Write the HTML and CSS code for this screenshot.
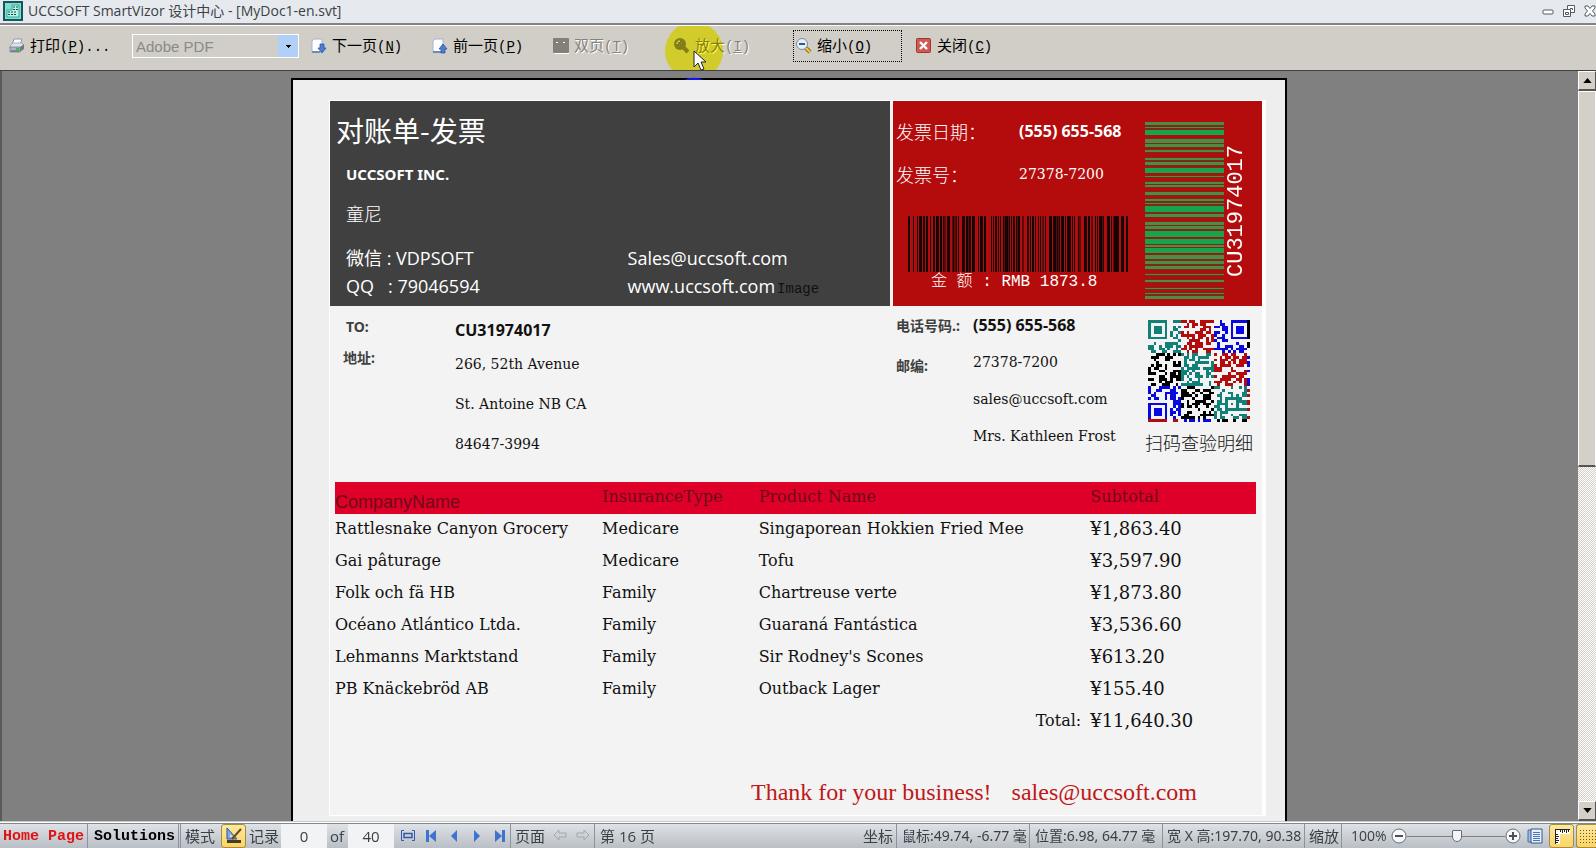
FILE: index.html
```html
<!DOCTYPE html>
<html lang="zh-CN">
<head>
<meta charset="utf-8">
<title>UCCSOFT SmartVizor 设计中心 - [MyDoc1-en.svt]</title>
<link rel="stylesheet" href="styles.css">
</head>
<body>
<div class="app">
  <header class="titlebar">
    <svg class="app-icon" viewBox="0 0 20 20"><rect width="20" height="20" fill="#14565a"/><rect x="2" y="2" width="16" height="16" fill="#7be0cd"/><path d="M9 4h7v12H4V9h5z" fill="#b9f4e6" stroke="#3aa596"/><path d="M10 6h2m1 0h2M10 8.500h2m1 0h2M5 11h2m1 0h2m1 0h2M5 13.500h2m1 0h2m1 0h2" stroke="#104c50"/></svg>
    <h1 class="title">UCCSOFT SmartVizor 设计中心 - [MyDoc1-en.svt]</h1>
    <div class="window-buttons">
      <button class="window-button" aria-label="最小化"><svg viewBox="0 0 12 12"><rect x="1" y="5" width="10" height="4" rx="1" fill="#fff" stroke="#555b62"/></svg></button>
      <button class="window-button" aria-label="还原"><svg viewBox="0 0 12 12"><path d="M4.500.5h7v7h-7z" fill="#fff" stroke="#555b62"/><path d="M.5 4.500h7v7h-7z" fill="#fff" stroke="#555b62"/><path d="M2.500 7.500h3v2h-3zM7 3.500h2.500V5" fill="none" stroke="#555b62"/></svg></button>
      <button class="window-button" aria-label="关闭窗口"><svg viewBox="0 0 12 12"><path d="M1 1h3l2 2.500L8 1h3v2L8.500 6 11 9v2H8L6 8.500 4 11H1V9l2.500-3L1 3z" fill="#fff" stroke="#555b62"/></svg></button>
    </div>
  </header>

  <div class="toolbar">
    <button class="tool print"><svg class="icon" viewBox="0 0 16 16"><path d="M5 1h8l-2 6H3z" fill="#fff" stroke="#8c98a8"/><path d="M1 8l3-3h9l2 2-3 3H1z" fill="#dfe4ea" stroke="#8a95a4" stroke-width=".7"/><path d="M1 9h10v5H1z" fill="#aab4c2" stroke="#6a7482" stroke-width=".7"/><path d="M11 9l4-3v5l-4 3z" fill="#6f7a89"/><path d="M2 13h8" stroke="#555e6c"/><path d="M7 11h3" stroke="#39c339" stroke-width="2"/></svg><span>打印<span class="key">(<u>P</u>)...</span></span></button>
    <select class="printer" aria-label="打印机" disabled><option>Adobe PDF</option></select>
    <div class="tools">
      <button class="tool"><svg class="icon" viewBox="0 0 16 16"><path d="M3 1h8v13H1V3z" fill="#fff" stroke="#a3b4d0"/><path d="M1 14h8" stroke="#7189b5" stroke-width="2"/><path d="M9 6h4v4h2l-4 5-4-5h2z" fill="#4d7dd0" stroke="#2c56a4" stroke-width=".8"/></svg><span>下一页<span class="key">(<u>N</u>)</span></span></button>
      <button class="tool"><svg class="icon" viewBox="0 0 16 16"><path d="M3 1h8v13H1V3z" fill="#fff" stroke="#a3b4d0"/><path d="M1 14h8" stroke="#7189b5" stroke-width="2"/><path d="M9 15h4v-4h2l-4-5-4 5h2z" fill="#4d7dd0" stroke="#2c56a4" stroke-width=".8"/></svg><span>前一页<span class="key">(<u>P</u>)</span></span></button>
      <button class="tool" disabled><svg class="icon" viewBox="0 0 16 16"><rect x="1" y="1" width="16" height="15" rx="1" fill="#fff"/><rect width="16" height="15" rx="1" fill="#838079"/><path d="M3 4.500h3m4 0h3" stroke="#fff" stroke-dasharray="2 1"/></svg><span>双页<span class="key">(<u>T</u>)</span></span></button>
      <button class="tool" disabled><svg class="icon" viewBox="0 0 16 16"><circle cx="6" cy="6" r="6" fill="#838079"/><path d="M9 9l5 5" stroke="#838079" stroke-width="4"/><path d="M3 6c0-2 1-3 3-3" stroke="#fff" fill="none"/></svg><span>放大<span class="key">(<u>I</u>)</span></span></button>
      <button class="tool focused"><svg class="icon" viewBox="0 0 16 16"><path d="M10 10l4 4" stroke="#8a6d14" stroke-width="4"/><path d="M10 10l4 4" stroke="#f2cf4a" stroke-width="2"/><circle cx="6" cy="6" r="5.500" fill="#e4f1fc" stroke="#7c8899"/><path d="M3 6h6" stroke="#35558f" stroke-width="2"/></svg><span>缩小<span class="key">(<u>O</u>)</span></span></button>
      <button class="tool"><svg class="icon" viewBox="0 0 16 16"><rect x=".5" y=".5" width="14" height="14" rx="1" fill="#cf5a54" stroke="#a33530"/><path d="M4 4l7 7m0-7l-7 7" stroke="#fff" stroke-width="2.400"/></svg><span>关闭<span class="key">(<u>C</u>)</span></span></button>
    </div>
    <div class="pointer-halo"></div>
  </div>

  <main class="workspace">
    <div class="canvas">
      <article class="sheet">
        <div class="invoice">
          <section class="banner">
            <div class="company">
              <h2 class="doc-title">对账单-发票</h2>
              <p class="company-name">UCCSOFT INC.</p>
              <p class="contact-name">童尼</p>
              <div class="contacts">
                <span>微信 : VDPSOFT</span><span>Sales@uccsoft.com</span>
                <span class="qq"><span>QQ</span><span>: 79046594</span></span><span class="site"><span>www.uccsoft.com</span><span class="image-tag">Image</span></span>
              </div>
            </div>
            <div class="meta">
              <div class="meta-main">
                <dl class="meta-list">
                  <dt>发票日期：</dt><dd class="strong">(555) 655-568</dd>
                  <dt>发票号：</dt><dd>27378-7200</dd>
                </dl>
                <svg class="barcode" id="barcode" viewBox="69 0 660 56" preserveAspectRatio="none" shape-rendering="crispEdges"></svg>
                <p class="amount">金 额 : RMB 1873.8</p>
              </div>
              <svg class="sidecode" id="sidecode" viewBox="0 96 79 531" preserveAspectRatio="none" shape-rendering="crispEdges"></svg>
              <p class="side-number">CU31974017</p>
            </div>
          </section>

          <section class="parties">
            <div class="labels left-labels"><span class="to">TO:</span><span>地址:</span></div>
            <div class="address"><strong>CU31974017</strong><span>266, 52th Avenue</span><span>St. Antoine NB CA</span><span>84647-3994</span></div>
            <div class="labels right-labels"><span>电话号码.:</span><span>邮编:</span></div>
            <div class="reach"><strong>(555) 655-568</strong><span>27378-7200</span><span>sales@uccsoft.com</span><span>Mrs. Kathleen Frost</span></div>
            <div class="qr"><svg class="qr-code" id="qr" viewBox="0 0 37 37" shape-rendering="crispEdges"></svg><span>扫码查验明细</span></div>
          </section>

          <table class="items">
            <thead><tr><th class="company-col">CompanyName</th><th class="type-col">InsuranceType</th><th class="product-col">Product Name</th><th>Subtotal</th></tr></thead>
            <tbody>
              <tr><td>Rattlesnake Canyon Grocery</td><td>Medicare</td><td>Singaporean Hokkien Fried Mee</td><td>¥1,863.40</td></tr>
              <tr><td>Gai pâturage</td><td>Medicare</td><td>Tofu</td><td>¥3,597.90</td></tr>
              <tr><td>Folk och fä HB</td><td>Family</td><td>Chartreuse verte</td><td>¥1,873.80</td></tr>
              <tr><td>Océano Atlántico Ltda.</td><td>Family</td><td>Guaraná Fantástica</td><td>¥3,536.60</td></tr>
              <tr><td>Lehmanns Marktstand</td><td>Family</td><td>Sir Rodney's Scones</td><td>¥613.20</td></tr>
              <tr><td>PB Knäckebröd AB</td><td>Family</td><td>Outback Lager</td><td>¥155.40</td></tr>
            </tbody>
            <tfoot><tr><td colspan="3" class="total">Total:</td><td>¥11,640.30</td></tr></tfoot>
          </table>
          <p class="thanks"><span>Thank for your business!</span><span>sales@uccsoft.com</span></p>
        </div>
      </article>
    </div>
    <div class="scrollbar">
      <button class="scroll-button" aria-label="向上滚动"><svg viewBox="0 0 10 6"><path d="M5 0l5 6H0z"/></svg></button>
      <div class="track"><div class="thumb"></div></div>
      <button class="scroll-button" aria-label="向下滚动"><svg viewBox="0 0 10 6"><path d="M5 6l5-6H0z"/></svg></button>
    </div>
  </main>

  <footer class="statusbar">
    <a class="link home" href="#home">Home Page</a>
    <a class="link" href="#solutions">Solutions</a>
    <span class="cell mode">模式</span>
    <button class="toggle" aria-label="设计模式"><svg viewBox="0 0 18 18"><path d="M2 1v11h10z" fill="#7ca9ea" stroke="#2855a8"/><path d="M5 7v3h3z" fill="#ffe08a"/><path d="M2 16h14v-3H2z" fill="#4a3b22"/><path d="M7 12L16 2" stroke="#6b4a22" stroke-width="2"/></svg></button>
    <label class="cell record" for="record">记录</label>
    <input class="field" id="record" value="0">
    <label class="of" for="count">of</label>
    <input class="field" id="count" value="40">
    <div class="nav">
      <button aria-label="适合宽度"><svg viewBox="0 0 14 14"><path d="M3 1.500H.5v10H3M11 1.500h2.500v10H11" fill="none" stroke="#315aa5"/><rect x="3" y="4.500" width="8" height="4" fill="none" stroke="#315aa5" stroke-width="1.500"/></svg></button>
      <button aria-label="首记录"><svg viewBox="0 0 14 14"><path d="M2 1h3v12H2zM12 1v12L5 7z" fill="#3f73d2"/></svg></button>
      <button aria-label="上一记录"><svg viewBox="0 0 14 14"><path d="M10 1v12L4 7z" fill="#3f73d2"/></svg></button>
      <button aria-label="下一记录"><svg viewBox="0 0 14 14"><path d="M4 1v12l6-6z" fill="#3f73d2"/></svg></button>
      <button aria-label="末记录"><svg viewBox="0 0 14 14"><path d="M9 1h3v12H9zM2 1v12l7-6z" fill="#3f73d2"/></svg></button>
    </div>
    <span class="cell pages">页面</span>
    <div class="arrows">
      <button disabled aria-label="上一页"><svg viewBox="0 0 14 14"><path d="M1 6l5-5v3h7v4H6v3z" fill="none" stroke="#a2a7ac"/></svg></button>
      <button disabled aria-label="下一页"><svg viewBox="0 0 14 14"><path d="M13 6L8 1v3H1v4h7v3z" fill="none" stroke="#a2a7ac"/></svg></button>
    </div>
    <span class="cell current">第 16 页</span>
    <span class="cell coords">坐标</span>
    <span class="cell measure">鼠标:49.74, -6.77 毫</span>
    <span class="cell measure">位置:6.98, 64.77 毫</span>
    <span class="cell size">宽 X 高:197.70, 90.38</span>
    <span class="cell zoom-label">缩放</span>
    <span class="percent">100%</span>
    <button class="zoom-button" aria-label="缩小显示"><svg viewBox="0 0 16 16"><circle cx="8" cy="8" r="7" fill="#f7f8f9" stroke="#666b70"/><path d="M4 8h8" stroke="#4b5056" stroke-width="2"/></svg></button>
    <input class="zoom" type="range" min="0" max="100" value="51" aria-label="缩放比例">
    <button class="zoom-button" aria-label="放大显示"><svg viewBox="0 0 16 16"><circle cx="8" cy="8" r="7" fill="#f7f8f9" stroke="#666b70"/><path d="M4 8h8M8 4v8" stroke="#4b5056" stroke-width="2"/></svg></button>
    <button class="view-button" aria-label="页面视图"><svg viewBox="0 0 16 16"><path d="M1 2h4v12H1z" fill="#9db9e4" stroke="#4b6fa8"/><path d="M4 1h11v14H4z" fill="#e9f1fc" stroke="#35568f"/><path d="M6 4.500h7M6 6.500h7M6 8.500h7M6 10.500h7M6 12.500h7" stroke="#4d76b8"/></svg></button>
    <button class="toggle" aria-label="标尺"><svg viewBox="0 0 18 18"><path d="M2 2h15v5H7v10H2z" fill="#fff"/><path d="M2.500 2v15M2 2.500h15M7.500 2v3M9.500 2v4M11.500 2v3M13.500 2v4M15.500 2v3M2 7.500h3M2 9.500h4M2 11.500h3M2 13.500h4M2 15.500h3" stroke="#222" fill="none"/></svg></button>
    <button class="toggle last" aria-label="网格"><svg viewBox="0 0 18 18"><path d="M0 3.500h18M0 6.500h18M0 9.500h18M0 12.500h18M0 15.500h18" stroke="#6b5520" stroke-dasharray="1 2"/></svg></button>
  </footer>

  <svg class="pointer" viewBox="0 0 30 32"><path d="M0 30c3-3 15-3 18 0z" fill="#1414e6"/><path d="M9 1v16l4-4 3 7 3-1-3-7h5z" fill="#fff" stroke="#222"/></svg>
</div>
<script src="codes.js"></script>
</body>
</html>
```
FILE: styles.css
```css
* { box-sizing: border-box; }
body {
  margin: 0;
  font-family: "Noto Sans", "Noto Sans CJK SC", sans-serif;
  font-size: 15px;
  color: #111;
}
h1, h2, p, dl, dd { margin: 0; }
svg { display: block; }
button {
  border: 0;
  padding: 0;
  background: none;
  color: inherit;
  font: inherit;
}
.app {
  position: relative;
  display: flex;
  flex-direction: column;
  height: 100vh;
  overflow: hidden;
}

.titlebar {
  flex: none;
  display: flex;
  align-items: center;
  gap: 5px;
  height: 25px;
  padding: 0 0 2px 3px;
  background: #e6eaee;
  border-bottom: 2px solid #848284;
}
.app-icon { width: 20px; height: 20px; }
.title {
  flex: 1;
  font-family: "Open Sans", "Noto Sans CJK SC", sans-serif;
  font-size: 14px;
  line-height: 20px;
  font-weight: 400;
  color: #3b4046;
}
.window-buttons { display: flex; gap: 9px; }
.window-button { width: 12px; height: 12px; }

.toolbar {
  position: relative;
  flex: none;
  display: flex;
  align-items: center;
  height: 46px;
  padding: 0 9px 4px;
  overflow: hidden;
  background: #d1cec7;
  border-top: 1px solid #fff;
  border-bottom: 1px solid #404040;
  font-family: "Noto Sans CJK SC", sans-serif;
}
.tool {
  display: flex;
  align-items: center;
  gap: 5px;
  width: 109px;
  height: 32px;
  padding-left: 2px;
  line-height: 20px;
  color: #000;
  white-space: nowrap;
}
.tool .icon { width: 16px; height: 16px; }
.tool:disabled { color: #85827c; text-shadow: 1px 1px #fff; }
.tool.focused { border: 1px dotted #000; }
.tool.print { width: 123px; padding-left: 0; }
.key { font-family: "Liberation Mono", monospace; font-size: 14px; }
.printer {
  width: 167px;
  height: 24px;
  padding: 0 3px;
  appearance: none;
  border: 1px solid #fff;
  border-radius: 0;
  opacity: 1;
  color: #8a8a88;
  font: 15px "Liberation Sans", sans-serif;
  background-color: #d1cec7;
  background-image:
    linear-gradient(#000, #000),
    linear-gradient(#000, #000),
    linear-gradient(#000, #000),
    linear-gradient(#b0d0f8, #b0d0f8);
  background-repeat: no-repeat;
  background-position: right 7px top 10px, right 8px top 11px, right 9px top 12px, right top;
  background-size: 5px 1px, 3px 1px, 1px 1px, 20px 100%;
}
.tools { display: flex; gap: 12px; margin-left: 10px; }
.pointer-halo {
  position: absolute;
  left: 665px;
  top: -4px;
  width: 58px;
  height: 58px;
  border-radius: 50%;
  background: #fffc38;
  mix-blend-mode: multiply;
}
.pointer {
  position: absolute;
  left: 685px;
  top: 50px;
  width: 30px;
  height: 32px;
}

.workspace {
  flex: 1;
  min-height: 0;
  display: flex;
  background: #808080;
  box-shadow: inset 2px 0 #5a5a5a;
}
.canvas {
  flex: 1;
  display: flex;
  justify-content: center;
  align-items: flex-start;
  padding-top: 7px;
  overflow: hidden;
}
.sheet {
  width: 100%;
  max-width: 996px;
  padding: 20px 19px 40px 36px;
  background: #eee;
  border: 2px solid #000;
}
.invoice {
  background: #f3f3f3;
  border: 1px solid #fff;
  border-right-width: 4px;
}
.banner { display: grid; grid-template-columns: 560fr 369fr; gap: 3px; }
.company { background: #404040; color: #fff; }
.doc-title {
  padding-left: 6px;
  font: 400 28px/58px "Noto Sans CJK SC", sans-serif;
}
.company-name {
  padding-left: 16px;
  font-size: 15px;
  line-height: 30px;
  font-weight: 700;
}
.contact-name {
  padding-left: 16px;
  font: 300 18px/48px "Noto Sans CJK SC", sans-serif;
}
.contacts {
  display: grid;
  grid-template-columns: 281fr 262fr;
  padding: 7px 0 6px 16px;
  font-family: "Open Sans", "Noto Sans CJK SC", sans-serif;
  font-size: 18px;
  line-height: 28px;
  white-space: nowrap;
}
.qq { display: grid; grid-template-columns: 42px auto; justify-content: start; }
.site { display: flex; align-items: baseline; gap: 2px; }
.image-tag { color: #111; font: 14px "Liberation Mono", monospace; }

.meta { display: flex; background: #b40c0c; color: #fff; }
.meta-main { flex: 1; padding-top: 9px; }
.meta-list {
  display: grid;
  grid-template-columns: 123px auto;
  padding-left: 3px;
  line-height: 43px;
}
.meta-list dt { font: 300 18px/43px "Noto Sans CJK SC", sans-serif; }
.meta-list dd { font: 14px/43px "DejaVu Serif", serif; }
.meta-list dd.strong { font: 700 16px/43px "Noto Sans", sans-serif; }
.barcode { width: 220px; height: 56px; margin: 20px 0 0 15px; }
.amount {
  padding-left: 23px;
  font: 300 16px/20px "Liberation Mono", "Noto Sans CJK SC", monospace;
  white-space: pre;
  padding-left: 38px;
}
.sidecode { width: 79px; height: 177px; margin: 21px 0 0; }
.side-number {
  width: 38px;
  padding: 29px 0 0 8px;
  writing-mode: vertical-rl;
  transform: rotate(180deg);
  font: 22px/26px "Liberation Mono", monospace;
}

.parties {
  display: grid;
  grid-template-columns: 125px 441px 77px 173px auto;
  height: 176px;
  white-space: nowrap;
}
.parties > div { display: flex; flex-direction: column; }
.labels {
  color: #404040;
  font-family: "Noto Sans", "Noto Sans CJK SC", sans-serif;
  font-size: 14px;
  font-weight: 700;
}
.left-labels { padding: 5px 0 0 13px; line-height: 31px; }
.to { padding-left: 3px; }
.right-labels { line-height: 40px; }
.address {
  padding-top: 8px;
  font: 14px/40px "DejaVu Serif", serif;
}
.address strong { font: 700 16px/32px "Noto Sans", sans-serif; margin-bottom: -2px; }
.reach {
  padding-top: 1px;
  font: 14px/37px "DejaVu Serif", serif;
}
.reach strong { font: 700 16px/37px "Noto Sans", sans-serif; }
.parties .qr {
  width: 106px;
  align-items: center;
  gap: 6px;
  padding-top: 14px;
  font: 300 18px/28px "Noto Sans CJK SC", sans-serif;
}
.qr-code { width: 102px; height: 102px; }

.items {
  width: calc(100% - 11px);
  margin-left: 5px;
  table-layout: fixed;
  border-collapse: collapse;
  font: 16px/24px "DejaVu Serif", serif;
}
.items th, .items td { height: 32px; padding: 0 0 2px; text-align: left; white-space: nowrap; }
.items thead { background: #de0028; color: #6e0a18; }
.items th { font-weight: 400; vertical-align: top; padding-top: 3px; }
.items .company-col {
  width: 29%;
  padding-bottom: 0;
  vertical-align: bottom;
  font-family: "Liberation Sans", sans-serif;
  font-size: 18px;
}
.type-col { width: 17%; }
.product-col { width: 36%; }
.items td:last-child { font-size: 18px; }
.items .total { padding-right: 9px; text-align: right; }
.thanks {
  display: flex;
  justify-content: flex-end;
  gap: 20px;
  padding: 38px 65px 7px 0;
  color: #be1818;
  font: 24px/32px "Liberation Serif", serif;
}

.scrollbar { width: 18px; display: flex; flex-direction: column; }
.scroll-button {
  height: 20px;
  display: grid;
  place-items: center;
  background: #d4d0c8;
  border: 1px solid #fff;
  border-right-color: #555;
  border-bottom: 2px solid #555;
}
.scroll-button svg { width: 9px; height: 5px; }
.track { flex: 1; background: repeating-conic-gradient(#fff 0 25%, #d4d0c8 0 50%) 0 0 / 2px 2px; }
.thumb {
  height: 53%;
  background: #d4d0c8;
  border: 1px solid #fff;
  border-bottom: 2px solid #555;
}

.statusbar {
  flex: none;
  display: flex;
  align-items: stretch;
  height: 27px;
  overflow: hidden;
  border-top: 1px solid #c8caca;
  box-shadow: inset 0 1px #fff, inset 0 2px #7e8890;
  padding-top: 2px;
  background: linear-gradient(#e2e5e8, #b9bfc6);
  color: #3b4046;
  font: 15px/24px "Open Sans", "Noto Sans CJK SC", sans-serif;
  white-space: nowrap;
}
.statusbar > * { flex: none; }
.link {
  width: 91px;
  padding-left: 6px;
  border-right: 1px solid #8c939a;
  color: #000;
  text-decoration: none;
  font: 700 15px/26px "Liberation Mono", monospace;
}
.link.home { width: 88px; padding-left: 3px; color: #e01414; }
.mode { width: 41px; padding-left: 4px; border-left: 1px solid #8c939a; margin-left: 1px; }
.toggle {
  width: 25px;
  padding: 2px 3px;
  background: linear-gradient(#fbe9a0, #fcd462);
  border: 1px solid #a58a45;
  border-radius: 3px;
}
.toggle svg { width: 18px; height: 18px; }
.toggle.last {
  width: 20px;
  margin-left: 2px;
  padding-right: 0;
  border-right: 0;
  border-radius: 3px 0 0 3px;
  overflow: hidden;
}
.record { width: 35px; padding-left: 3px; }
.statusbar .field {
  width: 46px;
  border: 0;
  padding: 0;
  background: #f2f3f4;
  color: inherit;
  font: inherit;
  text-align: center;
}
.of { width: 21px; padding-left: 3px; }
.nav, .arrows { display: flex; align-items: center; }
.nav { width: 117px; gap: 9px; padding-left: 7px; border-right: 1px solid #8c939a; }
.nav svg, .arrows svg { width: 14px; height: 14px; }
.pages { width: 42px; padding-left: 4px; }
.arrows { width: 42px; gap: 9px; border-right: 1px solid #8c939a; }
.statusbar .current { flex: 1 1 0; padding-left: 5px; overflow: hidden; }
.coords, .measure, .size, .zoom-label { border-right: 1px solid #8c939a; }
.coords { width: 34px; }
.measure, .size { font-family: "Noto Sans", "Noto Sans CJK SC", sans-serif; font-size: 14px; }
.measure { width: 133px; padding-left: 5px; }
.size { width: 142px; padding-left: 4px; }
.zoom-label { width: 37px; padding-left: 4px; }
.percent { width: 49px; padding-left: 9px; font-size: 14px; }
.zoom-button svg { width: 16px; height: 16px; }
.zoom {
  width: 98px;
  margin: 0;
  appearance: none;
  background: linear-gradient(#7c8186, #7c8186) center / 100% 1px no-repeat;
}
.zoom::-webkit-slider-thumb {
  appearance: none;
  width: 10px;
  height: 12px;
  background: #f4f5f6;
  border: 1px solid #666b70;
  border-radius: 1px 1px 5px 5px;
}
.view-button { width: 28px; padding-left: 6px; }
.view-button svg { width: 16px; height: 16px; }
```
FILE: codes.js
```js
const NS = 'http://www.w3.org/2000/svg';

function fillRects(svg, rects, color) {
  const path = document.createElementNS(NS, 'path');
  path.setAttribute('fill', color);
  path.setAttribute('d', rects.map(([x, y, w, h]) => `M${x} ${y}h${w}v${h}h${-w}z`).join(''));
  svg.appendChild(path);
}

const bars = '69-75 84-87 96-99 102-111 114-120 123-129 135-137 144-150 153-162 165-171 174-177 179-181 186-195 203-208 212-216 219-221 231-240 243-248 251-257 261-270 279-281 285-294 297-303 318-320 324-327 331-335 339-341 345-348 354-356 359-368 371-374 378-381 384-390 393-397 400-405 413-415 427-432 435-438 441-447 450-452 459-461 465-467 473-475 480-482 492-501 504-512 515-519 521-524 528-537 541-543 546-558 562-564 567-569 579-581 584-586 597-606 609-615 620-622 630-632 636-639 642-652 655-657 666-675 678-681 686-702 708-717 723-729'
  .split(' ').map(s => s.split('-').map(Number));
const barcode = document.getElementById('barcode');
fillRects(barcode, bars.map(([a, b]) => [a - 1, 0, b - a + 2, 56]), '#5c0a0a');
fillRects(barcode, bars.map(([a, b]) => [a, 0, b - a, 56]), '#160303');

const stripes = '96-105 111-114 120-134 147-159 162-171 179-186 204-211 216-225 234-248 258-262 276-283 285-291 306-315 327-334 339-342 348-366 372-381 396-405 408-417 423-440 447-462 465-471 473-488 495-507 513-522 528-537 552-555 570-577 594-597 609-612 618-627'
  .split(' ').map(s => s.split('-').map(Number));
const sidecode = document.getElementById('sidecode');
fillRects(sidecode, stripes.map(([a, b]) => [0, a - 2, 79, b - a + 4]), '#7d2a14');
fillRects(sidecode, stripes.filter(([a, b]) => b - a < 13).map(([a, b]) => [0, a, 79, b - a]), '#4c8c46');
fillRects(sidecode, stripes.filter(([a, b]) => b - a >= 13).map(([a, b]) => [0, a, 79, b - a]), '#18a44c');

const SIZE = 37;
const palette = [
  ['#108078', '#b40c0c', '#0808e0', '#000000'],
  ['#000000', '#108078', '#b40c0c', '#0808e0'],
  ['#0808e0', '#000000', '#108078', '#b40c0c'],
  ['#b40c0c', '#0808e0', '#000000', '#108078']
];
const ring = (dx, dy, outer) => {
  const d = Math.max(Math.abs(dx), Math.abs(dy));
  return outer === 3 ? d !== 2 : d !== 1;
};
let seed = 31974017;
const random = () => (seed = (seed * 1103515245 + 12345) % 2147483648) / 2147483648;
const modules = {};
for (let y = 0; y < SIZE; y++) {
  for (let x = 0; x < SIZE; x++) {
    let on = random() < 0.52;
    for (const [cx, cy] of [[3, 3], [33, 3], [3, 33]]) {
      const d = Math.max(Math.abs(x - cx), Math.abs(y - cy));
      if (d <= 4) on = d < 4 && ring(x - cx, y - cy, 3);
    }
    if (Math.abs(x - 30) <= 2 && Math.abs(y - 30) <= 2) on = ring(x - 30, y - 30, 2);
    if (on) {
      const color = palette[Math.floor(y / 12)][Math.floor(x / 12)];
      (modules[color] ||= []).push([x, y, 1, 1]);
    }
  }
}
const qr = document.getElementById('qr');
for (const [color, rects] of Object.entries(modules)) fillRects(qr, rects, color);
```
